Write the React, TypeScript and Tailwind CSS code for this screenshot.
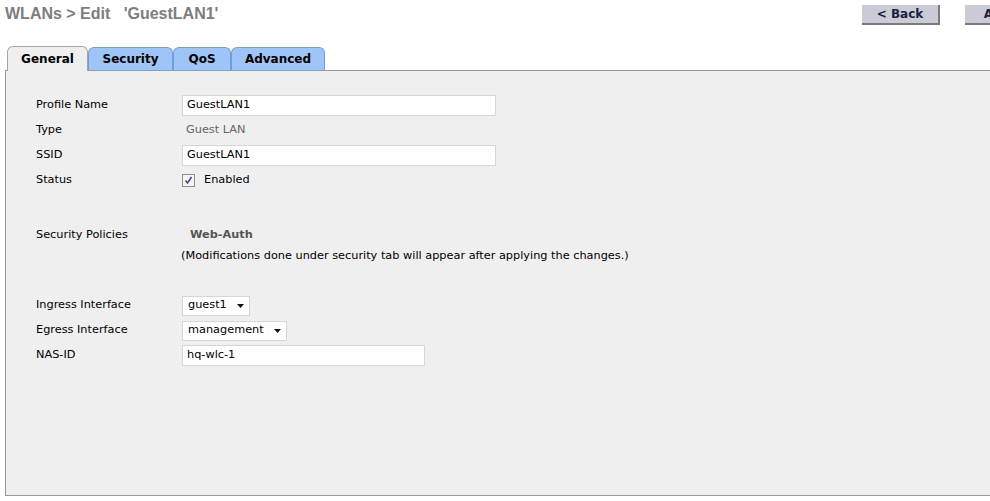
import React from 'react'

const font = { fontFamily: '"DejaVu Sans", Verdana, sans-serif' }

const Row: React.FC<{ label: string; h?: string; children?: React.ReactNode }> = ({ label, h = 'h-[25px]', children }) => (
  <div className={`flex items-center ${h}`}>
    <div className="w-[146px] shrink-0 text-[11.3px] text-black">{label}</div>
    <div className="flex items-center">{children}</div>
  </div>
)

const TextBox: React.FC<{ value: string; w: string }> = ({ value, w }) => (
  <div className={`${w} h-[21px] bg-white border border-[#d6d6d6] flex items-center pl-[4px] text-[11.3px] text-black`}>{value}</div>
)

const Select: React.FC<{ value: string }> = ({ value }) => (
  <div className="h-[20px] bg-white border border-[#d6d6d6] flex items-center pl-[5px] pr-[5px] text-[11.3px] text-black">
    <span>{value}</span>
    <svg width="7" height="4" viewBox="0 0 7 4" className="ml-[10px]">
      <path d="M0 0h7L3.5 4z" fill="#111" />
    </svg>
  </div>
)

const Tab: React.FC<{ label: string; active?: boolean; w: string }> = ({ label, active, w }) =>
  active ? (
    <div className={`${w} h-[25px] -mb-px relative z-10 bg-[#efefef] border border-b-0 border-[#a5a5a5] rounded-t-[6px] flex items-center justify-center text-[12px] font-bold text-black`}>
      {label}
    </div>
  ) : (
    <div className={`${w} h-[23px] bg-[#9fc5f8] border border-b-0 border-[#6f9ed8] rounded-t-[6px] flex items-center justify-center text-[12px] font-bold text-black`}>
      {label}
    </div>
  )

const Button: React.FC<{ label: string }> = ({ label }) => (
  <div className="w-[78px] h-[20px] bg-[#c9ccd6] border-r-2 border-b-2 border-[#7b7b7b] flex items-center justify-center text-[12px] font-bold text-[#1d1d3f]">
    {label}
  </div>
)

export default function App() {
  return (
    <div className="w-[990px] h-[501px] overflow-hidden bg-white" style={font}>
      <div className="w-[1050px]">
        <div className="flex items-start justify-between pl-[5px] pr-[7px] pt-[5px]">
          <div className="text-[16px] font-bold text-[#7d7d7d] leading-[18px] whitespace-pre" style={{ fontFamily: '"Liberation Sans", Arial, sans-serif' }}>
            {"WLANs > Edit   'GuestLAN1'"}
          </div>
          <div className="flex gap-[25px]">
            <Button label="< Back" />
            <Button label="Apply" />
          </div>
        </div>
        <div className="flex items-end pl-[7px] mt-[21px]">
          <Tab label="General" active w="w-[81px]" />
          <Tab label="Security" w="w-[85px]" />
          <Tab label="QoS" w="w-[58px]" />
          <Tab label="Advanced" w="w-[94px]" />
        </div>
        <div className="ml-[5px] h-[426px] bg-[#efefef] border border-r-0 border-[#9a9a9a] pl-[30px] pt-[22px]">
          <Row label="Profile Name"><TextBox value="GuestLAN1" w="w-[314px]" /></Row>
          <Row label="Type"><span className="pl-[4px] text-[11.3px] text-[#666]">Guest LAN</span></Row>
          <Row label="SSID"><TextBox value="GuestLAN1" w="w-[314px]" /></Row>
          <Row label="Status">
            <div className="w-[13px] h-[13px] bg-[#f4f4f4] border border-[#8d8d8d] flex items-center justify-center">
              <svg width="9" height="9" viewBox="0 0 9 9">
                <path d="M1.5 4.5l2 2.5 4-6" stroke="#3a4f8f" strokeWidth="1.6" fill="none" />
              </svg>
            </div>
            <span className="ml-[9px] text-[11.3px] text-black">Enabled</span>
          </Row>
          <div className="h-[31px]" />
          <Row label="Security Policies" h="h-[22px]">
            <span className="pl-[8px] text-[11.3px] font-bold text-[#555]">Web-Auth</span>
          </Row>
          <div className="flex items-center h-[21px] pl-[145px] text-[11.3px] text-black">
            (Modifications done under security tab will appear after applying the changes.)
          </div>
          <div className="h-[26px]" />
          <Row label="Ingress Interface"><Select value="guest1" /></Row>
          <Row label="Egress Interface"><Select value="management" /></Row>
          <Row label="NAS-ID"><TextBox value="hq-wlc-1" w="w-[243px]" /></Row>
        </div>
      </div>
    </div>
  )
}
